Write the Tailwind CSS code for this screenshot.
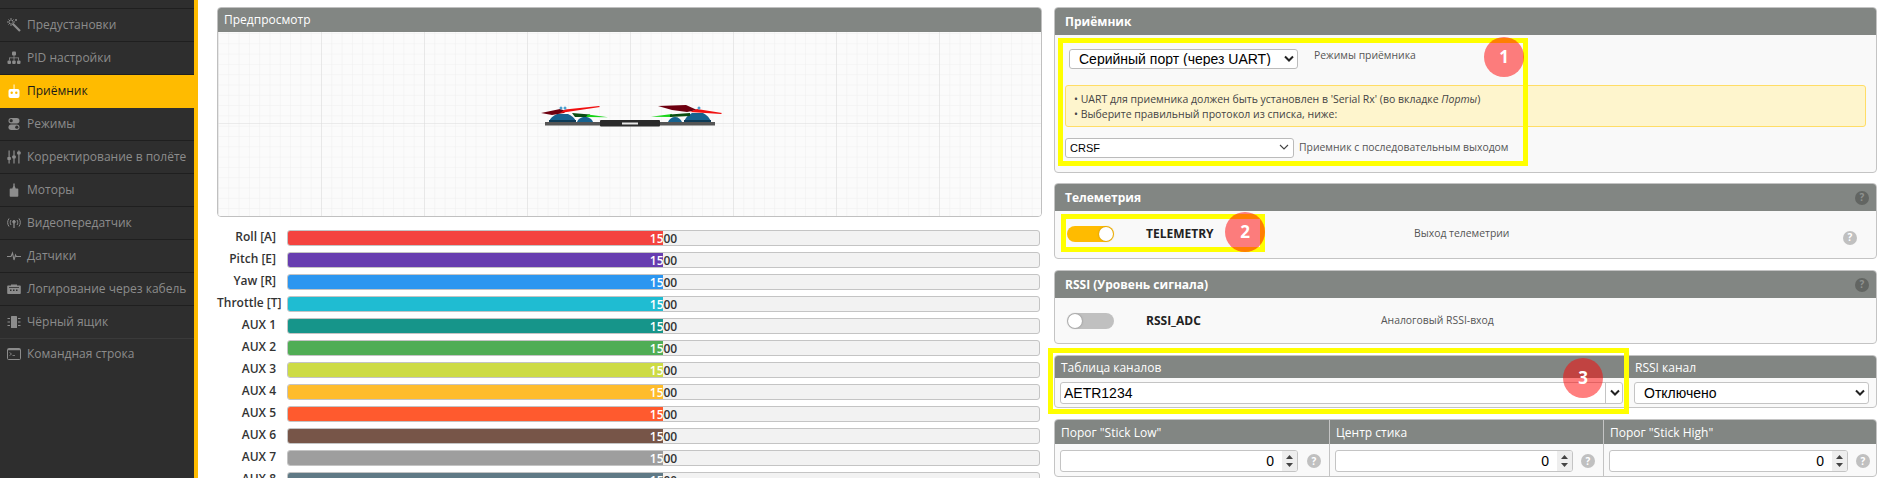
<!DOCTYPE html>
<html>
<head>
    <meta charset="UTF-8" />
    <title>Приёмник</title>
    <script src="https://cdn.jsdelivr.net/npm/@tailwindcss/browser@4"></script>
</head>
<body class="h-[478px] w-[1877px] overflow-hidden bg-white flex font-['Open_Sans',sans-serif] text-[12px] text-[#333]">

    <!-- SIDEBAR -->
    <nav class="w-[198px] h-[478px] shrink-0 bg-[#2e2e2e] border-r-4 border-[#ffbb00] text-[#8c8c8c] text-[12px]">
        <div class="h-[9px] border-b border-[#1f1f1f]"></div>
        <a class="h-[33px] flex items-center gap-[6px] pl-[7px] border-b border-[#1f1f1f]">
            <svg class="w-[14px] h-[14px]" viewBox="0 0 14 14" fill="none" stroke="currentColor"><path d="M5.5 5.5L13 13" stroke-width="2.2"/><path d="M4 0v3M4 5v3M0 4h3M5 4h3M1.5 1.5l1.500 1.500M6.500 1.500L5 3M1.500 6.500L3 5M9 1v2M8 2h2" stroke-width="1"/></svg>
            <span>Предустановки</span>
        </a>
        <a class="h-[33px] flex items-center gap-[6px] pl-[7px] border-b border-[#1f1f1f]">
            <svg class="w-[14px] h-[14px]" viewBox="0 0 14 14" fill="currentColor"><rect x="5" y="0.500" width="4" height="4" rx="1"/><rect x="0.500" y="9.500" width="3.500" height="3.500" rx="1"/><rect x="5.200" y="9.500" width="3.500" height="3.500" rx="1"/><rect x="10" y="9.500" width="3.500" height="3.500" rx="1"/><path d="M6.600 4h.8v2.500h4.600v3h-.8V7.300H7.400v2.200h-.8V7.300H2.800v2.200H2v-3h4.600z"/></svg>
            <span>PID настройки</span>
        </a>
        <a class="h-[33px] flex items-center gap-[6px] pl-[7px] bg-[#ffbb00] text-[#1a1a1a] border-b border-[#ffbb00]">
            <svg class="w-[14px] h-[14px] text-white" viewBox="0 0 14 14" fill="currentColor"><rect x="1.500" y="5" width="11" height="9" rx="2"/><rect x="6.600" y="0.500" width="0.900" height="5"/><circle cx="4.700" cy="8.800" r="1.200" fill="#ffbb00"/><circle cx="9.300" cy="8.800" r="1.200" fill="#ffbb00"/></svg>
            <span>Приёмник</span>
        </a>
        <a class="h-[33px] flex items-center gap-[6px] pl-[7px] border-b border-[#1f1f1f]">
            <svg class="w-[14px] h-[14px]" viewBox="0 0 14 14" fill="currentColor"><rect x="1.500" y="1" width="11" height="5.500" rx="2.700"/><rect x="1.500" y="7.500" width="11" height="5.500" rx="2.700"/><circle cx="4.200" cy="3.700" r="1.600" fill="#2e2e2e"/><circle cx="9.800" cy="10.200" r="1.600" fill="#2e2e2e"/></svg>
            <span>Режимы</span>
        </a>
        <a class="h-[33px] flex items-center gap-[6px] pl-[7px] border-b border-[#1f1f1f]">
            <svg class="w-[14px] h-[14px]" viewBox="0 0 14 14" fill="currentColor"><rect x="1.500" y="0.500" width="1.200" height="13"/><rect x="6.400" y="0.500" width="1.200" height="13"/><rect x="11.300" y="0.500" width="1.200" height="13"/><rect x="0.300" y="7" width="3.600" height="3" rx="0.800"/><rect x="5.200" y="5.500" width="3.600" height="3" rx="0.800"/><rect x="10.100" y="1.500" width="3.600" height="3" rx="0.800"/></svg>
            <span>Корректирование в полёте</span>
        </a>
        <a class="h-[33px] flex items-center gap-[6px] pl-[7px] border-b border-[#1f1f1f]">
            <svg class="w-[14px] h-[14px]" viewBox="0 0 14 14" fill="currentColor"><path d="M6.300 0.500h1.400v2.500l1 2.500h1.800c.5 0 .8.300.8.800V13c0 .5-.3.800-.8.800H3.500c-.5 0-.8-.3-.8-.8V6.300c0-.5.300-.8.800-.8h1.800l1-2.500z"/></svg>
            <span>Моторы</span>
        </a>
        <a class="h-[33px] flex items-center gap-[6px] pl-[7px] border-b border-[#1f1f1f]">
            <svg class="w-[14px] h-[14px]" viewBox="0 0 14 14" fill="none" stroke="currentColor" stroke-width="1"><path d="M2 2.500C.200 5 .200 8 2 10.500M12 2.500c1.800 2.500 1.800 5.500 0 8M4 4c-1 1.500-1 3.500 0 5M10 4c1 1.500 1 3.500 0 5"/><circle cx="7" cy="5.800" r="1.300" fill="currentColor"/><path d="M7 6.500v5.500" stroke-width="1.300"/></svg>
            <span>Видеопередатчик</span>
        </a>
        <a class="h-[33px] flex items-center gap-[6px] pl-[7px] border-b border-[#1f1f1f]">
            <svg class="w-[14px] h-[14px]" viewBox="0 0 14 14" fill="none" stroke="currentColor" stroke-width="1.100"><path d="M0 7.500h4l1.500-3.500 1.500 7 1.500-5 .8 1.500H14"/></svg>
            <span>Датчики</span>
        </a>
        <a class="h-[33px] flex items-center gap-[6px] pl-[7px] pb-[1px] border-b border-[#1f1f1f]">
            <svg class="w-[14px] h-[14px]" viewBox="0 0 14 14" fill="currentColor"><path d="M1 3.500h3V2.500h6v1h3c.5 0 .8.300.8.800v7c0 .5-.3.800-.8.800H1c-.5 0-.8-.3-.8-.8v-7c0-.5.300-.8.800-.8z"/><rect x="3" y="7.500" width="1.500" height="1.500" fill="#2e2e2e"/><rect x="6" y="7.500" width="1.500" height="1.500" fill="#2e2e2e"/><rect x="9" y="7.500" width="1.500" height="1.500" fill="#2e2e2e"/><rect x="2" y="5" width="10" height="0.800" fill="#2e2e2e"/></svg>
            <span>Логирование через кабель</span>
        </a>
        <a class="h-[33px] flex items-center gap-[6px] pl-[7px] pb-[1px] border-b border-[#3a3a3a]">
            <svg class="w-[14px] h-[14px]" viewBox="0 0 14 14" fill="currentColor"><rect x="4" y="1" width="6" height="12" rx="0.500"/><path d="M0.500 3h2.500v1H0.500zM0.500 6.500h2.500v1H0.500zM0.500 10h2.500v1H0.500zM11 3h2.500v1H11zM11 6.500h2.500v1H11zM11 10h2.500v1H11z"/></svg>
            <span>Чёрный ящик</span>
        </a>
        <a class="h-[33px] flex items-center gap-[6px] pl-[7px] pb-[3px]">
            <svg class="w-[14px] h-[14px]" viewBox="0 0 14 14" fill="none" stroke="currentColor"><rect x="0.500" y="1.500" width="13" height="11" rx="1"/><path d="M1 2.500h12" stroke-width="1.500"/><path d="M2.500 5.500L4.500 7l-2 1.500M5.500 8.500h2.500" stroke-width="0.800"/></svg>
            <span>Командная строка</span>
        </a>
    </nav>

    <!-- CONTENT -->
    <main class="flex-1 flex pl-[19px] pt-[7px] gap-[12px] items-start">

        <!-- LEFT COLUMN -->
        <div class="w-[825px] shrink-0">
            <section class="h-[210px] rounded-[4px] border border-[#c0c0c0] overflow-hidden">
                <h3 class="h-[24px] bg-[#828683] text-white text-[12px] flex items-center pl-[6px]">Предпросмотр</h3>
                <svg class="block w-[823px] h-[184px]" viewBox="0 0 823 184">
                    <defs>
                        <pattern id="minor" width="10.300" height="10.300" patternUnits="userSpaceOnUse" x="0" y="1">
                            <path d="M10.300 0H0V10.300" fill="none" stroke="#efefef" stroke-width="1"/>
                        </pattern>
                        <pattern id="major" width="103" height="103" patternUnits="userSpaceOnUse" x="0" y="-12">
                            <path d="M103 0H0V103" fill="none" stroke="#dcdcdc" stroke-width="1"/>
                        </pattern>
                    </defs>
                    <rect width="823" height="184" fill="#fbfbfb"/>
                    <rect width="823" height="184" fill="url(#minor)"/>
                    <rect width="823" height="184" fill="url(#major)"/>
                    <!-- drone -->
                    <g transform="translate(-218 -32)">
                        <rect x="545" y="122" width="56" height="3.500" fill="#555"/>
                        <rect x="600" y="120" width="60" height="6.500" rx="1" fill="#2b2b2b"/>
                        <rect x="622" y="122.500" width="16" height="2" fill="#e8e8e8"/>
                        <rect x="660" y="122" width="55" height="3.500" fill="#555"/>
                        <path d="M549 122c1-4 4-6 8-8h11c4 2 7 4 8 8z" fill="#16628f"/>
                        <path d="M577 122c1-3 4-5 8-5s7 2 8 5z" fill="#16628f"/>
                        <path d="M668 122c1-3 4-5 7-5s6 2 7 5z" fill="#16628f"/>
                        <path d="M684 122c1-4 4-7 8-9h11c4 2 7 5 8 9z" fill="#16628f"/>
                        <rect x="549" y="120" width="27" height="2" fill="#0d3b57"/>
                        <rect x="684" y="120" width="27" height="2" fill="#0d3b57"/>
                        <polygon points="572,113 590,114.500 590,117 575,117" fill="#0a4d12"/>
                        <polygon points="588,114.500 608,117.200 586,117" fill="#18d418"/>
                        <polygon points="651,116.800 672,114 672,117" fill="#18d418"/>
                        <polygon points="670,114.500 690,113 690,116 670,117" fill="#0a4d12"/>
                        <polygon points="541,113 560,109 566,111 564,113 552,115" fill="#6e0010"/>
                        <polygon points="560,113 565,109.500 599,106 600,107" fill="#f01010"/>
                        <polygon points="658,106 686,105 697,110 687,112 672,110" fill="#6e0010"/>
                        <polygon points="690,112 697,109 722,113 721,114" fill="#f01010"/>
                        <circle cx="561" cy="108" r="1.500" fill="#4aa0d0"/>
                        <circle cx="565" cy="108" r="1.500" fill="#4aa0d0"/>
                        <circle cx="699" cy="108" r="1.500" fill="#4aa0d0"/>
                    </g>
                </svg>
            </section>

            <!-- CHANNEL BARS -->
            <div class="mt-[13px] pr-[2px] flex flex-col gap-[6px] font-semibold">
                <div class="h-[16px] flex items-center gap-[11px]"><span class="w-[59px] mb-[2px] text-right text-[12px] leading-none">Roll [A]</span><div class="relative flex-1 h-[16px] bg-[#f2f2f2] border border-[#c4c4c4] rounded-[3px] overflow-hidden"><span class="absolute inset-0 text-center leading-[15px]">1500</span><div class="relative w-[375px] h-full overflow-hidden bg-[#f4433f] text-white"><span class="block w-[751px] text-center leading-[15px]">1500</span></div></div></div>
                <div class="h-[16px] flex items-center gap-[11px]"><span class="w-[59px] mb-[2px] text-right text-[12px] leading-none">Pitch [E]</span><div class="relative flex-1 h-[16px] bg-[#f2f2f2] border border-[#c4c4c4] rounded-[3px] overflow-hidden"><span class="absolute inset-0 text-center leading-[15px]">1500</span><div class="relative w-[375px] h-full overflow-hidden bg-[#673db0] text-white"><span class="block w-[751px] text-center leading-[15px]">1500</span></div></div></div>
                <div class="h-[16px] flex items-center gap-[11px]"><span class="w-[59px] mb-[2px] text-right text-[12px] leading-none">Yaw [R]</span><div class="relative flex-1 h-[16px] bg-[#f2f2f2] border border-[#c4c4c4] rounded-[3px] overflow-hidden"><span class="absolute inset-0 text-center leading-[15px]">1500</span><div class="relative w-[375px] h-full overflow-hidden bg-[#2c96f0] text-white"><span class="block w-[751px] text-center leading-[15px]">1500</span></div></div></div>
                <div class="h-[16px] flex items-center gap-[11px]"><span class="w-[59px] mb-[2px] text-right text-[12px] leading-none whitespace-nowrap">Throttle [T]</span><div class="relative flex-1 h-[16px] bg-[#f2f2f2] border border-[#c4c4c4] rounded-[3px] overflow-hidden"><span class="absolute inset-0 text-center leading-[15px]">1500</span><div class="relative w-[375px] h-full overflow-hidden bg-[#1fbcd2] text-white"><span class="block w-[751px] text-center leading-[15px]">1500</span></div></div></div>
                <div class="h-[16px] flex items-center gap-[11px]"><span class="w-[59px] mb-[2px] text-right text-[12px] leading-none">AUX 1</span><div class="relative flex-1 h-[16px] bg-[#f2f2f2] border border-[#c4c4c4] rounded-[3px] overflow-hidden"><span class="absolute inset-0 text-center leading-[15px]">1500</span><div class="relative w-[375px] h-full overflow-hidden bg-[#16958a] text-white"><span class="block w-[751px] text-center leading-[15px]">1500</span></div></div></div>
                <div class="h-[16px] flex items-center gap-[11px]"><span class="w-[59px] mb-[2px] text-right text-[12px] leading-none">AUX 2</span><div class="relative flex-1 h-[16px] bg-[#f2f2f2] border border-[#c4c4c4] rounded-[3px] overflow-hidden"><span class="absolute inset-0 text-center leading-[15px]">1500</span><div class="relative w-[375px] h-full overflow-hidden bg-[#50ad55] text-white"><span class="block w-[751px] text-center leading-[15px]">1500</span></div></div></div>
                <div class="h-[16px] flex items-center gap-[11px]"><span class="w-[59px] mb-[2px] text-right text-[12px] leading-none">AUX 3</span><div class="relative flex-1 h-[16px] bg-[#f2f2f2] border border-[#c4c4c4] rounded-[3px] overflow-hidden"><span class="absolute inset-0 text-center leading-[15px]">1500</span><div class="relative w-[375px] h-full overflow-hidden bg-[#cddb45] text-white"><span class="block w-[751px] text-center leading-[15px]">1500</span></div></div></div>
                <div class="h-[16px] flex items-center gap-[11px]"><span class="w-[59px] mb-[2px] text-right text-[12px] leading-none">AUX 4</span><div class="relative flex-1 h-[16px] bg-[#f2f2f2] border border-[#c4c4c4] rounded-[3px] overflow-hidden"><span class="absolute inset-0 text-center leading-[15px]">1500</span><div class="relative w-[375px] h-full overflow-hidden bg-[#febc2c] text-white"><span class="block w-[751px] text-center leading-[15px]">1500</span></div></div></div>
                <div class="h-[16px] flex items-center gap-[11px]"><span class="w-[59px] mb-[2px] text-right text-[12px] leading-none">AUX 5</span><div class="relative flex-1 h-[16px] bg-[#f2f2f2] border border-[#c4c4c4] rounded-[3px] overflow-hidden"><span class="absolute inset-0 text-center leading-[15px]">1500</span><div class="relative w-[375px] h-full overflow-hidden bg-[#ff5a2e] text-white"><span class="block w-[751px] text-center leading-[15px]">1500</span></div></div></div>
                <div class="h-[16px] flex items-center gap-[11px]"><span class="w-[59px] mb-[2px] text-right text-[12px] leading-none">AUX 6</span><div class="relative flex-1 h-[16px] bg-[#f2f2f2] border border-[#c4c4c4] rounded-[3px] overflow-hidden"><span class="absolute inset-0 text-center leading-[15px]">1500</span><div class="relative w-[375px] h-full overflow-hidden bg-[#775548] text-white"><span class="block w-[751px] text-center leading-[15px]">1500</span></div></div></div>
                <div class="h-[16px] flex items-center gap-[11px]"><span class="w-[59px] mb-[2px] text-right text-[12px] leading-none">AUX 7</span><div class="relative flex-1 h-[16px] bg-[#f2f2f2] border border-[#c4c4c4] rounded-[3px] overflow-hidden"><span class="absolute inset-0 text-center leading-[15px]">1500</span><div class="relative w-[375px] h-full overflow-hidden bg-[#9e9e9e] text-white"><span class="block w-[751px] text-center leading-[15px]">1500</span></div></div></div>
                <div class="h-[16px] flex items-center gap-[11px]"><span class="w-[59px] mb-[2px] text-right text-[12px] leading-none">AUX 8</span><div class="relative flex-1 h-[16px] bg-[#f2f2f2] border border-[#c4c4c4] rounded-[3px] overflow-hidden"><span class="absolute inset-0 text-center leading-[15px]">1500</span><div class="relative w-[375px] h-full overflow-hidden bg-[#607a86] text-white"><span class="block w-[751px] text-center leading-[15px]">1500</span></div></div></div>
            </div>
        </div>

        <!-- RIGHT COLUMN -->
        <div class="relative w-[823px] shrink-0 flex flex-col">

            <!-- Приёмник -->
            <section class="h-[166px] rounded-[4px] border border-[#c4c4c4] bg-[#f9f9f9] overflow-hidden">
                <h3 class="h-[27px] bg-[#828683] text-white font-bold text-[12px] flex items-center pl-[10px]">Приёмник</h3>
                <div class="flex items-start pl-[14px] pt-[14px] gap-[16px] h-[37px]">
                    <div class="relative w-[229px] h-[20px]">
                        <select class="w-full h-full appearance-none bg-white border border-[#bbb] rounded-[3px] pl-[9px] font-['Liberation_Sans',sans-serif] text-[14px] leading-none text-black outline-none"><option>Серийный порт (через UART)</option></select>
                        <svg class="absolute right-[4px] top-[6px] w-[10px] h-[8px]" viewBox="0 0 10 8" fill="none" stroke="#222" stroke-width="2"><path d="M1 1.500l4 4 4-4"/></svg>
                    </div>
                    <span class="text-[10.4px] text-[#555] leading-[12px]">Режимы приёмника</span>
                </div>
                <div class="mx-[10px] mt-[13px] w-[801px] h-[42px] bg-[#fef5cd] border border-[#ffdd66] rounded-[3px] pl-[8px] pt-[6px] text-[10.5px] leading-[15px] text-[#444]">
                    <p>• UART для приемника должен быть установлен в 'Serial Rx' (во вкладке <em>Порты</em>)</p>
                    <p>• Выберите правильный протокол из списка, ниже:</p>
                </div>
                <div class="flex items-center pl-[10px] mt-[11px] gap-[5px]">
                    <div class="relative w-[229px] h-[20px]">
                        <select class="w-full h-full appearance-none bg-white border border-[#bbb] rounded-[3px] pl-[4px] font-['Liberation_Sans',sans-serif] text-[11px] leading-none text-black outline-none"><option>CRSF</option></select>
                        <svg class="absolute right-[5px] top-[6px] w-[10px] h-[7px]" viewBox="0 0 10 7" fill="none" stroke="#444" stroke-width="1.100"><path d="M1 1l4 4 4-4"/></svg>
                    </div>
                    <span class="text-[10.4px] text-[#555]">Приемник с последовательным выходом</span>
                </div>
            </section>

            <!-- Телеметрия -->
            <section class="mt-[10px] h-[76px] rounded-[4px] border border-[#c4c4c4] bg-[#f9f9f9] overflow-hidden">
                <h3 class="h-[27px] bg-[#828683] text-white font-bold text-[12px] flex items-center justify-between pl-[10px] pr-[7px]">
                    <span>Телеметрия</span>
                    <span class="w-[14px] h-[14px] rounded-full bg-[#626562] text-[#8f928f] text-[10px] font-bold flex items-center justify-center">?</span>
                </h3>
                <div class="flex items-center h-[47px] pl-[12px] relative">
                    <div class="w-[47px] h-[16px] rounded-full bg-[#ffbb00] flex items-center justify-end pr-[1px] mb-[1px]"><div class="w-[14px] h-[14px] rounded-full bg-white shadow-[0_0_2px_#b08000]"></div></div>
                    <b class="ml-[32px] w-[268px] text-[#222] text-[12px] mb-[1px]">TELEMETRY</b>
                    <span class="text-[10.4px] text-[#555] w-[429px] mb-[1px]">Выход телеметрии</span>
                    <span class="w-[14px] h-[14px] rounded-full bg-[#c0c0c0] text-white text-[10px] font-bold flex items-center justify-center mt-[6px]">?</span>
                </div>
            </section>

            <!-- RSSI -->
            <section class="mt-[11px] h-[74px] rounded-[4px] border border-[#c4c4c4] bg-[#f9f9f9] overflow-hidden">
                <h3 class="h-[27px] bg-[#828683] text-white font-bold text-[12px] flex items-center justify-between pl-[10px] pr-[7px]">
                    <span>RSSI (Уровень сигнала)</span>
                    <span class="w-[14px] h-[14px] rounded-full bg-[#626562] text-[#8f928f] text-[10px] font-bold flex items-center justify-center">?</span>
                </h3>
                <div class="flex items-center h-[45px] pl-[12px]">
                    <div class="w-[47px] h-[16px] rounded-full bg-[#c0c0c0] flex items-center pl-[1px]"><div class="w-[14px] h-[14px] rounded-full bg-white shadow-[0_0_2px_#777]"></div></div>
                    <b class="ml-[32px] w-[235px] text-[#222] text-[12px]">RSSI_ADC</b>
                    <span class="text-[10.4px] text-[#555]">Аналоговый RSSI-вход</span>
                </div>
            </section>

            <!-- Таблица каналов / RSSI канал -->
            <section class="mt-[11px] h-[53px] flex rounded-[4px] border border-[#c4c4c4] bg-[#f9f9f9] overflow-hidden">
                <div class="w-[574px]">
                    <h3 class="h-[22px] pt-[2px] bg-[#828683] text-white text-[12px] flex items-center pl-[6px]">Таблица каналов</h3>
                    <div class="relative ml-[5px] mt-[4px] w-[563px] h-[22px]">
                        <select class="w-full h-full appearance-none bg-white border border-[#c4c4c4] rounded-[3px] pl-[3px] font-['Liberation_Sans',sans-serif] text-[14px] leading-none text-black outline-none"><option>AETR1234</option></select>
                        <div class="absolute right-0 top-0 w-[18px] h-[22px] border-l border-[#c4c4c4] flex items-center justify-center"><svg class="w-[10px] h-[8px]" viewBox="0 0 10 8" fill="none" stroke="#222" stroke-width="2"><path d="M1 1.500l4 4 4-4"/></svg></div>
                    </div>
                </div>
                <div class="flex-1">
                    <h3 class="h-[22px] pt-[2px] bg-[#828683] text-white text-[12px] flex items-center pl-[6px]">RSSI канал</h3>
                    <div class="relative ml-[5px] mt-[4px] w-[235px] h-[22px]">
                        <select class="w-full h-full appearance-none bg-white border border-[#c4c4c4] rounded-[3px] pl-[9px] font-['Liberation_Sans',sans-serif] text-[14px] leading-none text-black outline-none"><option>Отключено</option></select>
                        <svg class="absolute right-[4px] top-[7px] w-[10px] h-[8px]" viewBox="0 0 10 8" fill="none" stroke="#222" stroke-width="2"><path d="M1 1.500l4 4 4-4"/></svg>
                    </div>
                </div>
            </section>

            <!-- Пороги стика -->
            <section class="mt-[11px] h-[58px] grid grid-cols-[275px_274px_1fr] rounded-[4px] border border-[#c4c4c4] bg-[#f9f9f9] overflow-hidden">
                <div class="border-r border-[#c4c4c4]">
                    <h3 class="h-[24px] pt-[2px] bg-[#828683] text-white text-[12px] flex items-center pl-[6px]">Порог "Stick Low"</h3>
                    <div class="flex items-center mt-[6px] ml-[5px] gap-[9px]">
                        <div class="w-[238px] h-[22px] flex bg-white border border-[#c4c4c4] rounded-[3px] overflow-hidden"><input value="0" class="flex-1 min-w-0 text-right pr-[8px] font-['Liberation_Sans',sans-serif] text-[14px] text-black outline-none" /><div class="w-[15px] bg-[#eee] flex flex-col items-center justify-center gap-[4px]"><svg class="w-[7px] h-[4px]" viewBox="0 0 7 4" fill="#444"><path d="M3.500 0L7 4H0z"/></svg><svg class="w-[7px] h-[4px]" viewBox="0 0 7 4" fill="#444"><path d="M0 0h7L3.500 4z"/></svg></div></div>
                        <span class="w-[14px] h-[14px] rounded-full bg-[#c0c0c0] text-white text-[10px] font-bold flex items-center justify-center">?</span>
                    </div>
                </div>
                <div class="border-r border-[#c4c4c4]">
                    <h3 class="h-[24px] pt-[2px] bg-[#828683] text-white text-[12px] flex items-center pl-[6px]">Центр стика</h3>
                    <div class="flex items-center mt-[6px] ml-[5px] gap-[8px]">
                        <div class="w-[238px] h-[22px] flex bg-white border border-[#c4c4c4] rounded-[3px] overflow-hidden"><input value="0" class="flex-1 min-w-0 text-right pr-[8px] font-['Liberation_Sans',sans-serif] text-[14px] text-black outline-none" /><div class="w-[15px] bg-[#eee] flex flex-col items-center justify-center gap-[4px]"><svg class="w-[7px] h-[4px]" viewBox="0 0 7 4" fill="#444"><path d="M3.500 0L7 4H0z"/></svg><svg class="w-[7px] h-[4px]" viewBox="0 0 7 4" fill="#444"><path d="M0 0h7L3.500 4z"/></svg></div></div>
                        <span class="w-[14px] h-[14px] rounded-full bg-[#c0c0c0] text-white text-[10px] font-bold flex items-center justify-center">?</span>
                    </div>
                </div>
                <div>
                    <h3 class="h-[24px] pt-[2px] bg-[#828683] text-white text-[12px] flex items-center pl-[6px]">Порог "Stick High"</h3>
                    <div class="flex items-center mt-[6px] ml-[5px] gap-[8px]">
                        <div class="w-[239px] h-[22px] flex bg-white border border-[#c4c4c4] rounded-[3px] overflow-hidden"><input value="0" class="flex-1 min-w-0 text-right pr-[8px] font-['Liberation_Sans',sans-serif] text-[14px] text-black outline-none" /><div class="w-[15px] bg-[#eee] flex flex-col items-center justify-center gap-[4px]"><svg class="w-[7px] h-[4px]" viewBox="0 0 7 4" fill="#444"><path d="M3.500 0L7 4H0z"/></svg><svg class="w-[7px] h-[4px]" viewBox="0 0 7 4" fill="#444"><path d="M0 0h7L3.500 4z"/></svg></div></div>
                        <span class="w-[14px] h-[14px] rounded-full bg-[#c0c0c0] text-white text-[10px] font-bold flex items-center justify-center">?</span>
                    </div>
                </div>
            </section>

            <!-- Аннотации поверх скриншота -->
            <div class="absolute left-[4px] top-[31px] w-[470px] h-[128px] border-[5px] border-[#ffff00]"></div>
            <div class="absolute left-[7px] top-[207px] w-[204px] h-[38px] border-[5px] border-[#ffff00]"></div>
            <div class="absolute left-[-6px] top-[341px] w-[581px] h-[66px] border-[5px] border-[#ffff00]"></div>
            <div class="absolute left-[430px] top-[30px] w-[40px] h-[40px] rounded-full bg-[#ff0000]/50 text-white font-bold text-[17px] flex items-center justify-center">1</div>
            <div class="absolute left-[171px] top-[205px] w-[40px] h-[40px] rounded-full bg-[#ff0000]/50 text-white font-bold text-[17px] flex items-center justify-center">2</div>
            <div class="absolute left-[509px] top-[351px] w-[40px] h-[40px] rounded-full bg-[#ff0000]/50 text-white font-bold text-[17px] flex items-center justify-center">3</div>
        </div>
    </main>
</body>
</html>
